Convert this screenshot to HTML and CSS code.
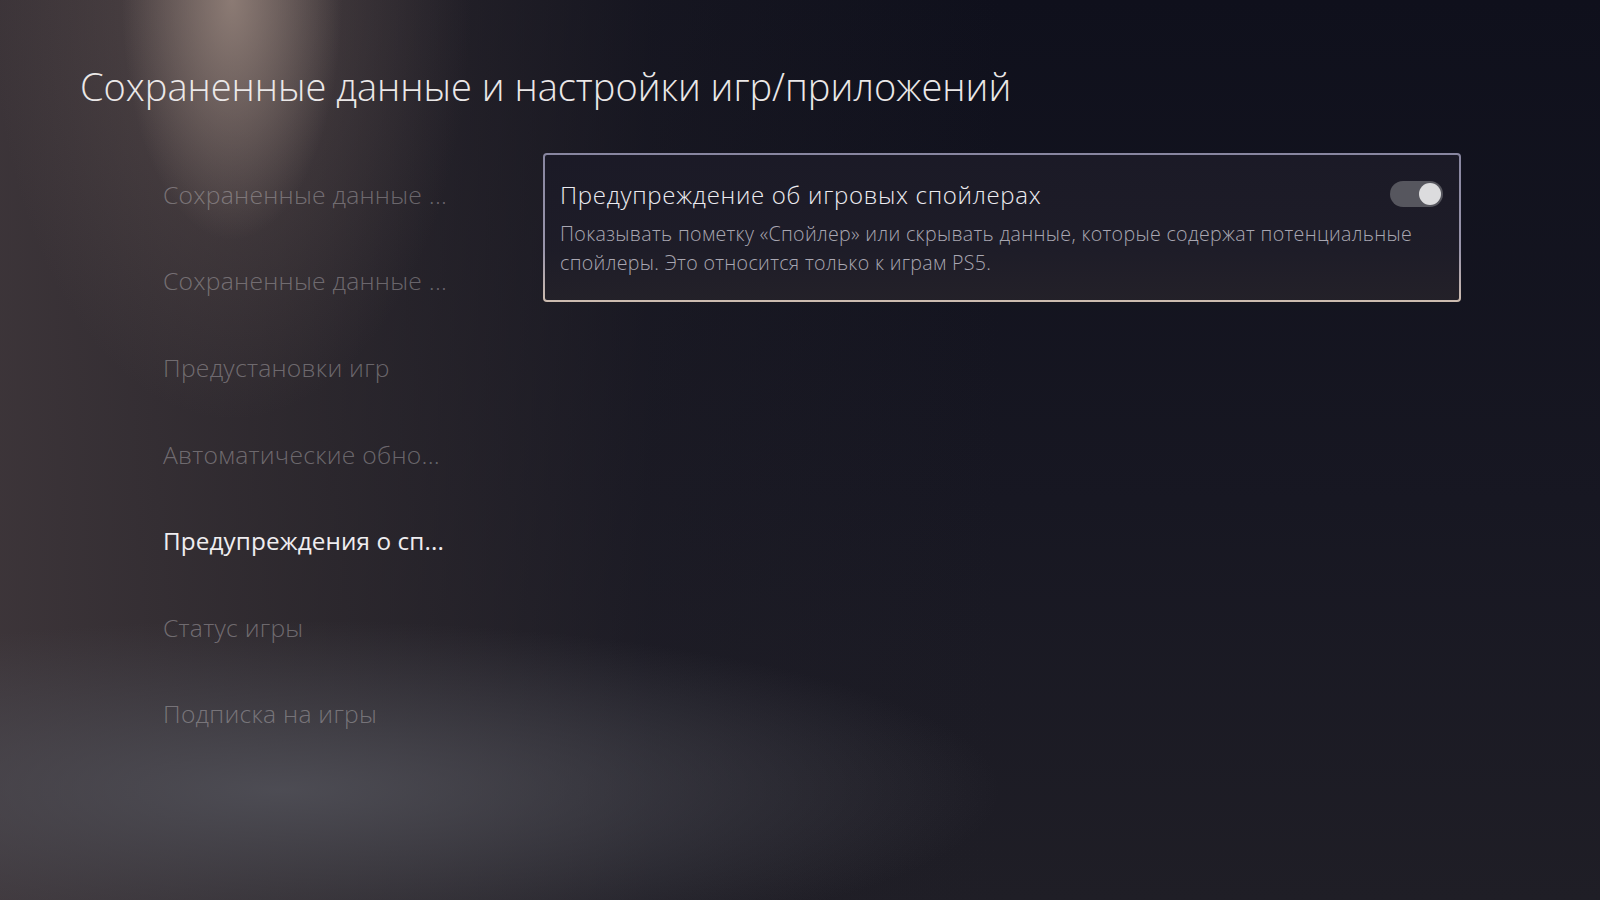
FILE: index.html
```html
<!DOCTYPE html>
<html lang="ru">
<head>
    <meta charset="UTF-8">
    <meta name="viewport" content="width=device-width, initial-scale=1.0">
    <title>Сохраненные данные и настройки игр/приложений</title>
    <link rel="stylesheet" href="styles.css">
</head>
<body>

    <!-- Page heading -->
    <header class="page-header">
        <h1 class="page-title">Сохраненные данные и настройки игр/приложений</h1>
    </header>

    <main class="settings">

        <!-- Left side menu -->
        <nav class="side-menu">
            <div class="menu-item">Сохраненные данные ...</div>
            <div class="menu-item">Сохраненные данные ...</div>
            <div class="menu-item">Предустановки игр</div>
            <div class="menu-item">Автоматические обно...</div>
            <div class="menu-item active">Предупреждения о сп...</div>
            <div class="menu-item">Статус игры</div>
            <div class="menu-item">Подписка на игры</div>
        </nav>

        <!-- Selected option -->
        <section class="options">
            <div class="option-card">
                <div class="option-head">
                    <span class="option-title">Предупреждение об игровых спойлерах</span>
                    <span class="toggle on"><span class="knob"></span></span>
                </div>
                <p class="option-desc">Показывать пометку «Спойлер» или скрывать данные, которые содержат потенциальные спойлеры. Это относится только к играм PS5.</p>
            </div>
        </section>

    </main>

</body>
</html>
```

FILE: styles.css
```css
html, body {
    height: 100%;
}

body {
    margin: 0;
    width: 1600px;
    height: 900px;
    overflow: hidden;
    font-family: "Open Sans", "Noto Sans", sans-serif;
    color: #e9e7ea;
    background:
        radial-gradient(ellipse 110px 240px at 232px 0px, rgba(150, 132, 124, 0.85), rgba(150, 132, 124, 0) 100%),
        radial-gradient(ellipse 240px 420px at 232px 0px, rgba(120, 102, 98, 0.45), rgba(120, 102, 98, 0) 100%),
        radial-gradient(ellipse 720px 170px at 280px 790px, rgba(82, 82, 90, 0.85), rgba(82, 82, 90, 0) 100%),
        linear-gradient(to right, rgba(62, 54, 58, 0.95) 0px, rgba(52, 46, 50, 0.75) 300px, rgba(34, 32, 40, 0.35) 650px, rgba(20, 20, 30, 0) 1000px),
        linear-gradient(to bottom, #0f101c 0px, #171722 500px, #1f1e26 900px);
}

/* Heading */
.page-header {
    padding: 61px 0 0 80px;
}

.page-title {
    margin: 0;
    font-size: 38px;
    font-weight: 300;
    line-height: 50px;
    color: #ebe8e8;
}

/* Two columns: menu and option list */
.settings {
    display: flex;
    padding: 40px 0 0 163px;
}

.side-menu {
    width: 380px;
    flex-shrink: 0;
}

.menu-item {
    height: 86.6px;
    display: flex;
    align-items: center;
    font-size: 24.7px;
    font-weight: 300;
    letter-spacing: 0.25px;
    color: rgba(200, 196, 200, 0.42);
    white-space: nowrap;
}

.menu-item.active {
    color: #efedf0;
    font-weight: 400;
    font-size: 24.3px;
    letter-spacing: 0.1px;
}

.options {
    width: 918px;
    padding-top: 2px;
}

/* Card with gradient frame */
.option-card {
    border: 2px solid transparent;
    border-radius: 4px;
    padding: 21px 16px 23px 15px;
    background:
        linear-gradient(rgba(15, 14, 25, 0.9), rgba(17, 16, 26, 0.9)) padding-box,
        linear-gradient(to top, #cdbcb0 0%, #9995ab 35%, #8886a0 100%) border-box;
}

.option-head {
    display: flex;
    align-items: center;
    justify-content: space-between;
    height: 36px;
}

.option-title {
    font-size: 24px;
    font-weight: 300;
    color: #ecebf0;
    letter-spacing: 0.7px;
}

.toggle {
    width: 53px;
    height: 26px;
    border-radius: 13px;
    background: #56565e;
    display: flex;
    align-items: center;
    padding: 0 2px;
    box-sizing: border-box;
}

.toggle.on {
    justify-content: flex-end;
}

.knob {
    width: 22px;
    height: 22px;
    border-radius: 50%;
    background: #dcdcde;
}

.option-desc {
    margin: 8px 0 0;
    font-size: 19.6px;
    line-height: 28.5px;
    font-weight: 300;
    letter-spacing: 0.33px;
    color: #a9a7b2;
    max-width: 885px;
}
```
